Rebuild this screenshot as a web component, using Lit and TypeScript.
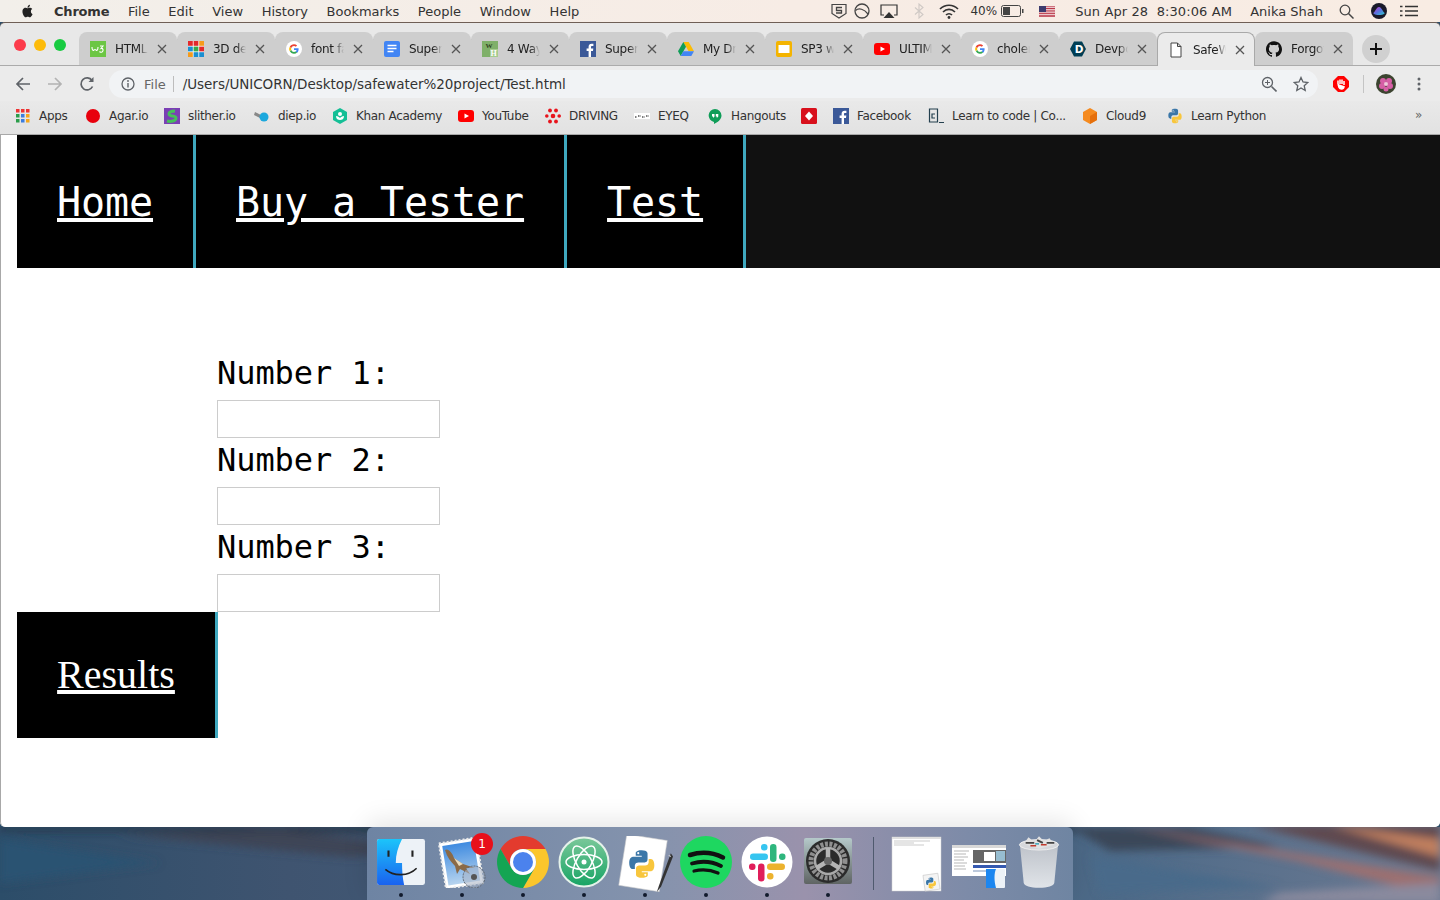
import { LitElement, html, css, svg } from "lit";
import { customElement } from "lit/decorators.js";

const PY_BLUE = "M11.9 1c-5 0-4.7 2.2-4.7 2.2v2.3h4.8v.7H5.3S2 5.8 2 11s2.8 5 2.8 5h1.7v-2.4s-.1-2.8 2.8-2.8h4.7s2.6 0 2.6-2.6V3.6S16.9 1 11.9 1zM9.2 2.5a.85.85 0 110 1.7.85.85 0 010-1.7z";
const GH = "M12 .297c-6.63 0-12 5.373-12 12 0 5.303 3.438 9.8 8.205 11.385.6.113.82-.258.82-.577 0-.285-.01-1.04-.015-2.04-3.338.724-4.042-1.61-4.042-1.61C4.422 18.07 3.633 17.7 3.633 17.7c-1.087-.744.084-.729.084-.729 1.205.084 1.838 1.236 1.838 1.236 1.07 1.835 2.809 1.305 3.495.998.108-.776.417-1.305.76-1.605-2.665-.3-5.466-1.332-5.466-5.93 0-1.31.465-2.38 1.235-3.22-.135-.303-.54-1.523.105-3.176 0 0 1.005-.322 3.3 1.23.96-.267 1.98-.399 3-.405 1.02.006 2.04.138 3 .405 2.28-1.552 3.285-1.23 3.285-1.23.645 1.653.24 2.873.12 3.176.765.84 1.23 1.91 1.23 3.22 0 4.61-2.805 5.625-5.475 5.92.42.36.81 1.096.81 2.22 0 1.606-.015 2.896-.015 3.286 0 .315.21.69.825.57C20.565 22.092 24 17.592 24 12.297c0-6.627-5.373-12-12-12";
const APPLE = "M18.71 19.5c-.83 1.24-1.71 2.45-3.05 2.47-1.34.03-1.77-.79-3.29-.79-1.53 0-2 .77-3.27.82-1.31.05-2.3-1.32-3.14-2.53C4.25 17 2.94 12.45 4.7 9.39c.87-1.52 2.43-2.48 4.12-2.51 1.28-.02 2.5.87 3.29.87.78 0 2.26-1.07 3.8-.91.65.03 2.47.26 3.64 1.98-.09.06-2.17 1.28-2.15 3.81.03 3.02 2.65 4.03 2.68 4.04-.03.07-.42 1.44-1.38 2.83M13 3.5c.73-.83 1.94-1.46 2.94-1.5.13 1.17-.34 2.35-1.04 3.19-.69.85-1.83 1.51-2.95 1.42-.15-1.15.41-2.35 1.05-3.11z";

const ic = (body: unknown, vb = "0 0 16 16", cls = "i16") =>
  html`<svg class=${cls} viewBox=${vb}>${body}</svg>`;

const google = ic(svg`<circle cx="8" cy="8" r="8" fill="#fff"/>
  <path d="M12.6 8.2c0-.4 0-.7-.1-1H8v1.9h2.6c-.1.6-.5 1.2-1 1.5l1.5 1.2c.9-.8 1.5-2.1 1.5-3.6z" fill="#4285f4"/>
  <path d="M8 12.8c1.3 0 2.3-.4 3.1-1.2l-1.5-1.2c-.4.3-1 .5-1.6.5-1.2 0-2.3-.8-2.7-2l-1.6 1.2c.8 1.6 2.4 2.7 4.3 2.7z" fill="#34a853"/>
  <path d="M5.3 8.9c-.2-.6-.2-1.2 0-1.8L3.7 5.9c-.7 1.3-.7 2.9 0 4.2z" fill="#fbbc05"/>
  <path d="M8 5c.7 0 1.3.2 1.8.7l1.3-1.3C10.300 3.600 9.200 3.200 8 3.200c-1.900 0-3.500 1.100-4.300 2.700l1.600 1.200C5.700 5.900 6.800 5 8 5z" fill="#ea4335"/>`);
const fb = ic(svg`<rect width="16" height="16" fill="#3b5998"/><path d="M11 16v-6h2l.3-2.400H11V6c0-.7.200-1.100 1.200-1.100h1.200V2.800c-.2 0-1-.1-1.800-.1-1.800 0-3 1.100-3 3.100v1.800h-2V10h2v6z" fill="#fff"/>`);
const yt = ic(svg`<rect x="0" y="2" width="16" height="12" rx="3" fill="#f00"/><path d="M6.500 5.500v5L11 8z" fill="#fff"/>`);

const tabs = [
  { t: "HTML", i: ic(svg`<rect width="16" height="16" fill="#6cc644"/><path d="M2 6c0 3 1 4 2 3s1-1 2 0 2 0 2-3M10 5h3l-2 2.500c2-.5 3 2 1 3.500-1 .5-2 0-2.500-.5" fill="none" stroke="#fff" stroke-width="1.100"/>`) },
  { t: "3D de", i: ic(svg`<rect width="16" height="16" fill="#fff"/><rect width="4.800" height="4.800" fill="#e3292b"/><rect x="5.600" width="4.800" height="4.800" fill="#e3292b"/><rect x="11.200" width="4.800" height="4.800" fill="#f59b1c"/><rect y="5.600" width="4.800" height="4.800" fill="#1a8fd1"/><rect x="5.600" y="5.600" width="4.800" height="4.800" fill="#39a84a"/><rect x="11.200" y="5.600" width="4.800" height="4.800" fill="#e3292b"/><rect y="11.200" width="4.800" height="4.800" fill="#f59b1c"/><rect x="5.600" y="11.200" width="4.800" height="4.800" fill="#1a8fd1"/><rect x="11.200" y="11.200" width="4.800" height="4.800" fill="#1a8fd1"/>`) },
  { t: "font fa", i: google },
  { t: "Super", i: ic(svg`<rect width="16" height="16" rx="2" fill="#4285f4"/><path d="M3.500 4.500h9M3.500 7.500h9M3.500 10.500h6" stroke="#fff" stroke-width="1.500"/>`) },
  { t: "4 Way", i: ic(svg`<rect width="16" height="16" fill="#7fb069"/><rect x="8" y="8" width="8" height="8" fill="#a5cc8e"/><text x="3.500" y="7" font-size="7" font-weight="700" font-family="Liberation Serif" fill="#30421f">W</text><text x="8.500" y="15" font-size="8" font-weight="700" font-family="Liberation Serif" fill="#fff">H</text>`) },
  { t: "Super", i: fb },
  { t: "My Dr", i: ic(svg`<path d="M5.300 1h5.400l5.300 9.300h-5.400z" fill="#fbbc05"/><path d="M5.300 1L0 10.300 2.700 15l5.300-9.300z" fill="#0f9d58"/><path d="M2.700 15h10.600L16 10.300H5.400z" fill="#4285f4"/>`) },
  { t: "SP3 w", i: ic(svg`<rect width="16" height="16" rx="2" fill="#f4b400"/><rect x="2.500" y="4" width="11" height="8" fill="#fff"/>`) },
  { t: "ULTIM", i: yt },
  { t: "choler", i: google },
  { t: "Devpo", i: ic(svg`<path d="M4 .5h8L16 8l-4 7.500H4L0 8z" fill="#003e54"/><text x="4.800" y="11.800" font-size="10.500" font-weight="700" font-family="DejaVu Sans" fill="#fff">D</text>`) },
  { t: "SafeW", a: true, i: ic(svg`<path d="M3 1h6.500L13 4.500V15H3zM9.500 1v3.500H13" fill="#fff" stroke="#444" stroke-width="1"/>`) },
  { t: "Forgot", i: ic(svg`<path d=${GH} fill="#111"/>`, "0 0 24 24") },
];

const py = (size: number) => html`<svg width=${size} height=${size} viewBox="0 0 24 24"><path d=${PY_BLUE} fill="#3b77a8"/><path d=${PY_BLUE} fill="#f8c63d" transform="rotate(180 12 12)"/></svg>`;

const bookmarks = [
  { w: 70, t: "Apps", i: ic(svg`<g fill="#e33"><rect x="1" y="1" width="3.500" height="3.500"/><rect x="6" y="1" width="3.500" height="3.500"/><rect x="11" y="1" width="3.500" height="3.500"/></g><rect x="1" y="6" width="3.500" height="3.500" fill="#2a9d4a"/><rect x="6" y="6" width="3.500" height="3.500" fill="#3b7de0"/><rect x="11" y="6" width="3.500" height="3.500" fill="#f4a61d"/><rect x="1" y="11" width="3.500" height="3.500" fill="#2a9d4a"/><rect x="6" y="11" width="3.500" height="3.500" fill="#3b7de0"/><rect x="11" y="11" width="3.500" height="3.500" fill="#f4a61d"/>`) },
  { w: 79, t: "Agar.io", i: ic(svg`<circle cx="8" cy="8" r="7" fill="#e8000d"/>`) },
  { w: 90, t: "slither.io", i: ic(svg`<rect width="16" height="16" fill="#7b3fb5"/><path d="M3 13c4 1 9 0 9-3s-7-1-7-4 3-3 6-3" fill="none" stroke="#46c05a" stroke-width="3"/>`) },
  { w: 78, t: "diep.io", i: ic(svg`<path d="M1 4l6 3-1 3-6-3z" fill="#888"/><circle cx="10" cy="9" r="4.500" fill="#1ca8dd"/>`) },
  { w: 126, t: "Khan Academy", i: ic(svg`<path d="M8 0l7 4v8l-7 4-7-4V4z" fill="#14bf96"/><circle cx="8" cy="6" r="2" fill="#fff"/><path d="M4 8c0 3 2 4 4 4s4-1 4-4c-2 0-3 1-4 2-1-1-2-2-4-2z" fill="#fff"/>`) },
  { w: 87, t: "YouTube", i: yt },
  { w: 89, t: "DRIVING", i: ic(svg`<g fill="#e8141c"><circle cx="8" cy="8" r="2.300"/><circle cx="5" cy="2.500" r="1.900"/><circle cx="11" cy="2.500" r="1.900"/><circle cx="5" cy="13.500" r="1.900"/><circle cx="11" cy="13.500" r="1.900"/><circle cx="1.800" cy="8" r="1.800"/><circle cx="14.200" cy="8" r="1.800"/></g>`) },
  { w: 73, t: "EYEQ", i: ic(svg`<rect y="5" width="16" height="6" fill="#fff"/><path d="M1 9h2M4 8h3M8 9h3M12 8h3" stroke="#555" stroke-width="1.500" stroke-dasharray="1 .5"/>`) },
  { w: 94, t: "Hangouts", i: ic(svg`<path d="M8 1a6.500 6.500 0 00-1 12.900V16c3.500-1.500 7.500-4.500 7.500-8.500A6.500 6.500 0 008 1z" fill="#0f9d58"/><path d="M5 6h2.500v2.500L6 10V8.500H5zM8.800 6h2.500v2.500L9.800 10V8.500h-1z" fill="#fff"/>`) },
  { w: 32, t: "", i: ic(svg`<rect width="16" height="16" rx="1.500" fill="#d8101c"/><path d="M8 3.500L12 8l-4 4.500L4 8z" fill="#fff"/>`) },
  { w: 95, t: "Facebook", i: fb },
  { w: 154, t: "Learn to code | Co...", i: ic(svg`<path d="M1.500 1h8v13h-8z" fill="none" stroke="#24404f" stroke-width="1.200"/><path d="M7 6H4v4h3M11 14.500h5" fill="none" stroke="#24404f" stroke-width="1.200"/>`) },
  { w: 85, t: "Cloud9", i: ic(svg`<path d="M8 0l7 4v8l-7 4-7-4V4z" fill="#f58a1f"/><path d="M8 8l7-4v8l-7 4z" fill="#e56f0c"/>`) },
  { w: 100, t: "Learn Python", i: py(16) },
];

const wall = svg`<svg class="wall" viewBox="0 0 1440 73" preserveAspectRatio="none">
  <defs>
    <linearGradient id="wb" x1="0" x2="1" y1="0" y2="0"><stop offset="0" stop-color="#2c4d69"/><stop offset=".2" stop-color="#3f5470"/><stop offset=".78" stop-color="#4d6a88"/><stop offset="1" stop-color="#6d7a92"/></linearGradient>
    <filter id="b1" x="-20%" y="-100%" width="140%" height="300%"><feGaussianBlur stdDeviation="4"/></filter>
  </defs>
  <rect width="1440" height="73" fill="url(#wb)"/>
  <g filter="url(#b1)">
    <path d="M0 0H1100V5C800 8 500 6 0 3z" fill="#1c2a38"/>
    <path d="M120 8l230 22 100-6L280 2z" fill="#3e4253" opacity=".9"/>
    <path d="M0 12L160 36l-160 20z" fill="#2b5272"/>
    <path d="M1070 0h120l90 20-170 4z" fill="#3a4658"/>
    <path d="M1120 -2l320 52v20L1300 34z" fill="#9d6f70"/>
    <path d="M1250 -2h190v46z" fill="#5e4a50"/>
    <path d="M1330 -2l110 32V12z" fill="#c07f5f"/>
    <path d="M1090 30l190 30-180 6z" fill="#4a6a8a"/>
    <path d="M1280 66l160-10v20h-180z" fill="#8a8a9e"/>
  </g>
</svg>`;

const finder = html`<svg class="d48" viewBox="0 0 48 48"><defs><linearGradient id="f1" x1="0" x2="0" y1="0" y2="1"><stop offset="0" stop-color="#1cc4fa"/><stop offset="1" stop-color="#1a62ef"/></linearGradient></defs><rect x="1" y="2" width="46" height="44" rx="2" fill="#edf2f7"/><path d="M3 2h22c-4 8-6 15-6 23h6c0 7 .5 14 2 21H3a2 2 0 01-2-2V4a2 2 0 012-2z" fill="url(#f1)"/><path d="M12 13v6M35 13v6" stroke="#222" stroke-width="2"/><path d="M9 31c8 7 22 7 30-1" fill="none" stroke="#222" stroke-width="1.600"/></svg>`;

const mail = html`<svg class="d52" viewBox="0 0 52 52"><defs><linearGradient id="m1" x1="0" x2="0" y1="0" y2="1"><stop offset="0" stop-color="#3f8be0"/><stop offset="1" stop-color="#b7d4ef"/></linearGradient></defs><g transform="rotate(-9 26 26)"><rect x="6" y="4" width="38" height="46" fill="#fff" stroke="#e8e8e8" stroke-dasharray="2 2" stroke-width="2"/><rect x="9" y="7" width="32" height="40" fill="url(#m1)"/></g><path d="M9 14c3-2 7 2 9 8l9 6 12 4-9 0 4 6-10-5-3 5-2-8c-4-4-8-9-10-16z" fill="#8a6a48"/><path d="M18 22l9 6-4 2z" fill="#e9dcc0"/><circle cx="38" cy="41" r="11" fill="#a8b3c4" fill-opacity=".55" stroke="#5e6670" stroke-dasharray="2 1"/><circle cx="38" cy="41" r="3" fill="#555"/></svg>`;

const chrome = html`<svg class="d52" viewBox="0 0 52 52"><path d="M3.500 13A26 26 0 0148.500 13H26A13 13 0 0014.700 32.500z" fill="#e33b2e"/><path d="M48.500 13A26 26 0 0126 52l11.300-19.500A13 13 0 0026 13z" fill="#fbc62c"/><path d="M26 52A26 26 0 013.500 13l11.200 19.500a13 13 0 0022.600 0z" fill="#14a553"/><circle cx="26" cy="26" r="13" fill="#fff"/><circle cx="26" cy="26" r="10" fill="#4b82ed"/></svg>`;

const atom = html`<svg class="d52" viewBox="0 0 52 52"><defs><linearGradient id="a1" x1="0" x2="0" y1="0" y2="1"><stop offset="0" stop-color="#7bc89a"/><stop offset="1" stop-color="#16a464"/></linearGradient></defs><circle cx="26" cy="26" r="24.500" fill="url(#a1)" stroke="#e5f2ea" stroke-width="2"/><g fill="none" stroke="#fff" stroke-width="1.500"><ellipse cx="26" cy="26" rx="18" ry="7.500"/><ellipse cx="26" cy="26" rx="18" ry="7.500" transform="rotate(60 26 26)"/><ellipse cx="26" cy="26" rx="18" ry="7.500" transform="rotate(120 26 26)"/></g><circle cx="26" cy="26" r="2.500" fill="#fff"/></svg>`;

const pydoc = html`<svg class="d52 wide" viewBox="0 0 52 52"><g transform="rotate(9 24 26)"><rect x="5" y="1" width="38" height="48" fill="#fff" stroke="#ccc" stroke-width=".5"/></g><svg x="9" y="12" width="28" height="28" viewBox="0 0 24 24"><path d=${PY_BLUE} fill="#3b77a8"/><path d=${PY_BLUE} fill="#f8c63d" transform="rotate(180 12 12)"/></svg><path d="M50 16L39 46l-2 6 4-5 11-28z" fill="#333"/><path d="M48 18l2 1" stroke="#ccc"/></svg>`;

const spotify = html`<svg class="d52" viewBox="0 0 52 52"><circle cx="26" cy="26" r="26" fill="#1ed760"/><g fill="none" stroke="#111" stroke-linecap="round"><path d="M10 19c11-3.500 23-2.500 33 2.500" stroke-width="4.500"/><path d="M12 27.500c10-3 20-2 29 2.500" stroke-width="3.800"/><path d="M14 35c8-2 16-1.500 24 2" stroke-width="3.200"/></g></svg>`;

const slack = html`<svg class="d52" viewBox="0 0 52 52"><circle cx="26" cy="26" r="25.500" fill="#fff"/><rect x="9" y="17.500" width="18" height="6.500" rx="3.200" fill="#36c5f0"/><rect x="20" y="8" width="6.500" height="6.500" rx="3" fill="#36c5f0"/><rect x="29" y="8" width="6.500" height="18" rx="3.200" fill="#2eb67d"/><rect x="38" y="17.500" width="6.500" height="6.500" rx="3" fill="#2eb67d"/><rect x="26" y="27.500" width="18" height="6.500" rx="3.200" fill="#ecb22e"/><rect x="26" y="37" width="6.500" height="6.500" rx="3" fill="#ecb22e"/><rect x="17" y="27.500" width="6.500" height="18" rx="3.200" fill="#e01e5a"/><rect x="8" y="27.500" width="6.500" height="6.500" rx="3" fill="#e01e5a"/></svg>`;

const prefs = html`<svg class="d52" viewBox="0 0 52 52"><defs><linearGradient id="p1" x1="0" x2="0" y1="0" y2="1"><stop offset="0" stop-color="#b5c9ca"/><stop offset="1" stop-color="#5f6463"/></linearGradient></defs><rect x="2" y="2" width="48" height="46" rx="2" fill="url(#p1)"/><circle cx="26" cy="25" r="22" fill="#2b2b2b"/><circle cx="26" cy="25" r="17" fill="none" stroke="#8f8f8f" stroke-width="5" stroke-dasharray="3 1.500"/><circle cx="26" cy="25" r="13" fill="none" stroke="#a9a9a9" stroke-width="2.500"/><g stroke="#b5b5b5" stroke-width="4.500"><path d="M26 25V12M26 25L14.500 32M26 25l11.500 7"/></g><circle cx="26" cy="25" r="4" fill="#666"/></svg>`;

const docthumb = html`<svg class="thumb" viewBox="0 0 52 56"><rect x="1" y="1" width="49" height="54" fill="#fff" stroke="#d0d0d0" stroke-width=".5"/><rect x="1" y="1" width="49" height="2" fill="#e0e0e0"/><path d="M3 5h36M3 7h20M3 9h30" stroke="#aaa" stroke-width=".6"/><g transform="rotate(-8 42 46)"><rect x="33" y="38" width="15" height="16" fill="#f4f4f4" stroke="#bbb" stroke-width=".5"/></g><svg x="34" y="41" width="12" height="12" viewBox="0 0 24 24"><path d=${PY_BLUE} fill="#3b77a8"/><path d=${PY_BLUE} fill="#f8c63d" transform="rotate(180 12 12)"/></svg></svg>`;

const shotthumb = html`<svg class="thumb" viewBox="0 0 56 56"><rect x="2" y="9" width="54" height="31" fill="#fff"/><rect x="2" y="9" width="54" height="3" fill="#d8d8d8"/><path d="M4 15h15M4 18h12M4 21h14M4 24h10M4 27h13M4 30h11M4 33h12" stroke="#888" stroke-width=".6"/><rect x="23" y="14" width="33" height="13" fill="#666"/><rect x="34" y="16" width="11" height="9" fill="#fff"/><rect x="46" y="15" width="9" height="10" fill="#97bdd0"/><rect x="23" y="29" width="33" height="3" fill="#3559b0"/><path d="M23 35h32" stroke="#7a93b8" stroke-width="1"/><rect x="36" y="33" width="19" height="19" rx="1" fill="#edf2f7"/><path d="M36 33h10c-2 4-2 12 0 19H36z" fill="#1c86f0"/></svg>`;

const trash = html`<svg class="d52 tr" viewBox="0 0 44 56"><defs><linearGradient id="t1" x1="0" x2="0" y1="0" y2="1"><stop offset="0" stop-color="#c6c9ce"/><stop offset="1" stop-color="#eceef0"/></linearGradient></defs><path d="M2 10h40l-4 40c-.5 3-7 5-16 5s-15.500-2-16-5z" fill="url(#t1)" fill-opacity=".9"/><ellipse cx="22" cy="10" rx="20.500" ry="5.500" fill="#d5d7db" stroke="#eee"/><path d="M6 9l5-7 6 5 5-6 5 5 6-3 5 7-16 4z" fill="#e2e2e2"/><path d="M8 8h9M20 5l6 3M30 8h8" stroke="#444" stroke-width="2"/><path d="M13 11h6M24 10h6" stroke="#c0392b" stroke-width="1.500"/><path d="M18 9h4" stroke="#2f9fb5" stroke-width="1.500"/></svg>`;

@customElement("app-root")
export class AppRoot extends LitElement {
  static styles = css`
    :host { display: block; position: relative; width: 1440px; height: 900px; overflow: hidden; font-family: "DejaVu Sans", sans-serif; background: #2c4d69; }
    svg { display: block; flex: none; }
    .i16 { width: 16px; height: 16px; }
    .wall { position: absolute; left: 0; top: 827px; width: 1440px; height: 73px; }

    .menubar { position: relative; height: 22px; box-sizing: border-box; display: flex; align-items: center; padding-left: 20px; font-size: 13px; color: #333; background: linear-gradient(90deg, #f2efea, #f7ece5 55%, #f8ece3); }
    .apple { width: 15px; height: 16px; margin-right: 19px; }
    .menus { display: flex; gap: 18.650px; }
    .menus b { font-weight: 700; letter-spacing: -0.2px; }
    .status { margin-left: auto; display: flex; align-items: center; }
    .s1 { width: 16px; height: 16px; margin-right: 7px; }
    .s2 { width: 16px; height: 16px; margin-right: 10px; }
    .s3 { width: 18px; height: 15px; margin-right: 16px; }
    .s4 { width: 10px; height: 16px; margin-right: 15px; }
    .s5 { width: 20px; height: 15px; margin-right: 11px; }
    .pct { font-size: 12px; margin-right: 4px; }
    .batt { width: 23px; height: 12px; margin-right: 15px; }
    .flag { width: 16px; height: 11px; margin-right: 20px; }
    .clock { margin-right: 17px; width: 158px; white-space: pre; letter-spacing: 0.1px; }
    .who { margin-right: 16px; white-space: nowrap; }
    .srch { width: 15px; height: 15px; margin-right: 17px; }
    .siri { width: 16px; height: 16px; margin-right: 13px; }
    .lst { width: 18px; height: 12px; margin-right: 22px; }

    .window { position: relative; height: 805px; display: flex; flex-direction: column; border-top: 1px solid #6f5f56; border-radius: 5px; overflow: hidden; background: #e8e8e8; box-sizing: border-box; }

    .strip { height: 43px; box-sizing: border-box; padding-top: 9px; display: flex; align-items: flex-start; border-bottom: 1px solid #ababab; flex: none; }
    .lights { width: 79px; box-sizing: border-box; padding: 7px 0 0 14px; display: flex; gap: 8px; }
    .lights i { width: 12px; height: 12px; border-radius: 50%; }
    .r { background: #fc3b4b; } .y { background: #fdbb0a; } .g { background: #18cb41; }
    .tabs { display: flex; }
    .tab { position: relative; width: 98px; height: 33px; box-sizing: border-box; background: #cecece; border-radius: 8px 8px 0 0; display: flex; align-items: center; padding-left: 11px; font: 12px "DejaVu Sans", sans-serif; letter-spacing: -0.3px; color: #222; }
    .tab.active { background: #ebebeb; border: 1px solid #a9a9a9; border-bottom: 0; height: 34px; padding-left: 10px; z-index: 1; }
    .tab .title { margin-left: 9px; width: 33px; overflow: hidden; white-space: nowrap; -webkit-mask-image: linear-gradient(90deg, #000 72%, transparent); mask-image: linear-gradient(90deg, #000 72%, transparent); }
    .tab .x { width: 10px; height: 10px; margin-left: 9px; }
    .tab.sep::after { content: ""; position: absolute; right: -1px; top: 7px; height: 19px; width: 1px; background: #9c9c9c; }
    .newtab { width: 28px; height: 28px; margin: 3px 0 0 9px; border-radius: 50%; background: #d0d0d0; display: flex; align-items: center; justify-content: center; }

    .toolbar { height: 35px; box-sizing: border-box; padding-top: 1px; display: flex; align-items: center; background: #ebebeb; flex: none; }
    .tb { width: 32px; display: flex; justify-content: center; }
    .tb1 { margin-left: 7px; }
    .omni { margin-left: 6px; width: 1209px; height: 28px; box-sizing: border-box; border-radius: 14px; background: #f1f3f5; display: flex; align-items: center; padding-left: 11px; font: 14px "DejaVu Sans", sans-serif; }
    .file { color: #666; margin-left: 8px; font-size: 13px; }
    .bar { width: 1px; height: 16px; background: #bdbdbd; margin: 0 9px 0 7px; }
    .url { color: #333; font-size: 13.500px; letter-spacing: -0.04px; white-space: nowrap; }
    .rt { margin-left: auto; display: flex; align-items: center; gap: 16px; padding-right: 9px; }
    .tools { display: flex; align-items: center; }
    .t-op { margin: 0 14px 0 15px; }
    .t-sep { width: 1px; height: 18px; background: #c4c4c4; margin-right: 12px; }
    .avatar { width: 20px; height: 20px; margin-right: 21px; }
    .dots { width: 4px; height: 14px; }

    .marks { height: 34px; box-sizing: border-box; padding: 0 0 4px 15px; display: flex; align-items: center; background: linear-gradient(#e9e9e9, #e2e2e2); border-bottom: 1px solid #a8a8a8; font-size: 12px; letter-spacing: -0.33px; color: #333; position: relative; flex: none; }
    .mark { display: flex; align-items: center; gap: 8px; white-space: nowrap; flex: none; box-sizing: border-box; }
    .chev { position: absolute; right: 18px; top: 7px; font-size: 12px; color: #666; }

    .page { flex: 1; background: #fff; padding-left: 16px; border-left: 1px solid #a8a8a8; border-radius: 0 0 5px 5px; }
    .nav { display: flex; background: #111; }
    .nav a, .res a { color: #fff; text-decoration: underline; }
    .item { background: #000; padding: 41px 40px 39px; border-right: 3px solid #3fa8bf; font: 40px/53px "DejaVu Sans Mono", monospace; letter-spacing: -0.08px; white-space: pre; }
    .form { margin: 83px 0 0 200px; width: 223px; display: flex; flex-direction: column; }
    .form label { font: 32px/45px "DejaVu Sans Mono", monospace; padding-bottom: 4px; letter-spacing: -0.06px; color: #000; white-space: pre; }
    .form input { width: 223px; height: 38px; box-sizing: border-box; border: 1px solid #ccc; margin: 0; padding: 0; background: #fff; outline: none; }
    .res { width: 198px; background: #000; border-right: 3px solid #3fa8bf; font: 40px/46px "Liberation Serif", serif; padding: 40px 0; text-align: center; }

    .dock { position: absolute; left: 367px; top: 827px; width: 706px; height: 73px; box-sizing: border-box; padding-left: 3px; display: flex; border-radius: 6px 6px 0 0; background: linear-gradient(90deg, #6e84a3, #8493ad 40%, #9a92ac 62%, #7d8ba8 85%, #6f85a2); box-shadow: 0 -6px 26px rgba(0,0,0,.1); }
    .cell { position: relative; width: 61px; height: 73px; display: flex; justify-content: center; padding-top: 9px; box-sizing: border-box; }
    .cell.on::after { content: ""; position: absolute; left: 29px; top: 66px; width: 4px; height: 4px; border-radius: 50%; background: #111a2c; }
    .d52 { width: 52px; height: 52px; }
    .d48 { width: 50px; height: 50px; margin-top: 1px; }
    .d52.wide { width: 56px; height: 56px; }
    .d52.tr { width: 42px; height: 54px; margin-top: -1px; }
    .thumb { width: 56px; height: 56px; }
    .dsep { width: 1px; height: 53px; margin: 10px 12.500px 0 14.500px; background: #4f5a6e; }
    .badge { position: absolute; left: 40px; top: 6px; width: 22px; height: 22px; border-radius: 50%; background: #e8101a; color: #fff; font-size: 12px; line-height: 22px; text-align: center; }
  `;

  render() {
    const x = html`<svg class="x" viewBox="0 0 10 10"><path d="M1 1l8 8M9 1l-8 8" stroke="#555" stroke-width="1.300"/></svg>`;
    return html`
      ${wall}
      <div class="menubar">
        <svg class="apple" viewBox="0 0 24 24"><path d=${APPLE} fill="#222"/></svg>
        <div class="menus"><b>Chrome</b><span>File</span><span>Edit</span><span>View</span><span>History</span><span>Bookmarks</span><span>People</span><span>Window</span><span>Help</span></div>
        <div class="status">
          <svg class="s1" viewBox="0 0 16 16"><path d="M1 1.500h14v9L8 15l-7-4.500z" fill="none" stroke="#444" stroke-width="1.200"/><path d="M11 4.500H5.500v3h5v2.500H5" fill="none" stroke="#444" stroke-width="1.300"/></svg>
          <svg class="s2" viewBox="0 0 16 16"><circle cx="8" cy="8" r="7" fill="none" stroke="#444" stroke-width="1.300"/><path d="M1.500 7.500C5 4.500 10 6 14 11" fill="none" stroke="#444" stroke-width="1.300"/></svg>
          <svg class="s3" viewBox="0 0 18 15"><path d="M4 11H1V1h16v10h-3" fill="none" stroke="#333" stroke-width="1.200"/><path d="M9 8l5.500 6h-11z" fill="#333"/></svg>
          <svg class="s4" viewBox="0 0 10 16"><path d="M1 4.500l8 7L5 15V1l4 3.500-8 7" fill="none" stroke="#cfc9c5" stroke-width="1.100"/></svg>
          <svg class="s5" viewBox="0 0 20 15"><path d="M1 5c5-5 13-5 18 0M4 8c3.500-3.500 8.500-3.500 12 0M7 11c1.700-1.700 4.300-1.700 6 0" fill="none" stroke="#333" stroke-width="1.700"/><circle cx="10" cy="13.500" r="1.400" fill="#333"/></svg>
          <span class="pct">40%</span>
          <svg class="batt" viewBox="0 0 23 12"><rect x=".5" y=".5" width="19" height="11" rx="2" fill="none" stroke="#444"/><rect x="2" y="2" width="7" height="8" fill="#444"/><rect x="21" y="4" width="1.500" height="4" fill="#444"/></svg>
          <svg class="flag" viewBox="0 0 16 11"><rect width="16" height="11" fill="#fff"/><path d="M0 .8h16M0 2.500h16M0 4.200h16M0 5.900h16M0 7.600h16M0 9.300h16M0 10.700h16" stroke="#b22234" stroke-width=".9"/><rect width="7" height="6" fill="#3c3b6e"/></svg>
          <span class="clock">Sun Apr 28  8:30:06 AM</span>
          <span class="who">Anika Shah</span>
          <svg class="srch" viewBox="0 0 15 15"><circle cx="6" cy="6" r="4.800" fill="none" stroke="#444" stroke-width="1.300"/><path d="M9.500 9.500l5 5" stroke="#444" stroke-width="1.500"/></svg>
          <svg class="siri" viewBox="0 0 16 16"><defs><linearGradient id="si" x1="0" x2="1" y1="0" y2="1"><stop offset="0" stop-color="#d33ac7"/><stop offset=".5" stop-color="#5a6fe0"/><stop offset="1" stop-color="#2ed0d0"/></linearGradient></defs><circle cx="8" cy="8" r="8" fill="#1a1a2a"/><path d="M2 10c2 0 3-6 6-6s4 6 6 6c-2 2-4 2-6 2s-4 0-6-2z" fill="url(#si)"/></svg>
          <svg class="lst" viewBox="0 0 18 12"><path d="M5 1.500h13M5 6h13M5 10.500h13" stroke="#333" stroke-width="1.500"/><path d="M0 1.500h2.500M0 6h2.500M0 10.500h2.500" stroke="#333" stroke-width="1.500"/></svg>
        </div>
      </div>

      <div class="window">
        <div class="strip">
          <div class="lights"><i class="r"></i><i class="y"></i><i class="g"></i></div>
          <div class="tabs">
            ${tabs.map((t, n) => html`<div class="tab ${t.a ? "active" : ""} ${!t.a && n < 10 ? "sep" : ""}">${t.i}<span class="title">${t.t}</span>${x}</div>`)}
          </div>
          <div class="newtab"><svg class="i16" viewBox="0 0 16 16"><path d="M8 2v12M2 8h12" stroke="#111" stroke-width="2"/></svg></div>
        </div>

        <div class="toolbar">
          <div class="tb tb1"><svg class="i16" viewBox="0 0 16 16"><path d="M15 8H2M8 2L2 8l6 6" fill="none" stroke="#5f6368" stroke-width="1.700"/></svg></div>
          <div class="tb"><svg class="i16" viewBox="0 0 16 16"><path d="M1 8h13M8 2l6 6-6 6" fill="none" stroke="#b3b3b3" stroke-width="1.700"/></svg></div>
          <div class="tb"><svg class="i16" viewBox="0 0 16 16"><path d="M13.500 10.500A6 6 0 1113 4.500" fill="none" stroke="#5f6368" stroke-width="1.700"/><path d="M14.500 1v5h-5z" fill="#5f6368"/></svg></div>
          <div class="omni">
            <svg class="i16" viewBox="0 0 16 16"><circle cx="8" cy="8" r="6" fill="none" stroke="#5f6368" stroke-width="1.300"/><path d="M8 7v4.500" stroke="#5f6368" stroke-width="1.400"/><circle cx="8" cy="5" r=".9" fill="#5f6368"/></svg>
            <span class="file">File</span><span class="bar"></span>
            <span class="url">/Users/UNICORN/Desktop/safewater%20project/Test.html</span>
            <div class="rt">
              <svg class="i16" viewBox="0 0 16 16"><circle cx="6.500" cy="6.500" r="5" fill="none" stroke="#5f6368" stroke-width="1.300"/><path d="M10.500 10.500l5 5" stroke="#5f6368" stroke-width="1.600"/><path d="M4 6.500h5M6.500 4v5" stroke="#5f6368"/></svg>
              <svg class="i16" viewBox="0 0 16 16"><path d="M8 1.500l2 4.500 4.800.5-3.600 3.200 1 4.800L8 12l-4.200 2.500 1-4.800L1.200 6.500 6 6z" fill="none" stroke="#5f6368" stroke-width="1.300"/></svg>
            </div>
          </div>
          <div class="tools">
            <svg class="i16 t-op" viewBox="0 0 16 16"><path d="M5 0h6l5 5v6l-5 5H5l-5-5V5z" fill="#f00"/><path d="M5 8V4.500M7 8V3.500M9 8V3.500M11 9V5M5 8l1 3.500c.5 1 1.500 1.500 2.500 1.500s2.500-1 2.500-3" stroke="#fff" stroke-width="1.500" fill="#fff"/></svg>
            <span class="t-sep"></span>
            <svg class="avatar" viewBox="0 0 20 20"><circle cx="10" cy="10" r="10" fill="#3c4430"/><g fill="#d65fa6"><circle cx="7" cy="7" r="3"/><circle cx="13" cy="7" r="3"/><circle cx="6" cy="12" r="3"/><circle cx="14" cy="12" r="3"/><circle cx="10" cy="15" r="2.500"/></g><circle cx="10" cy="10" r="2" fill="#f3c6dc"/></svg>
            <svg class="dots" viewBox="0 0 4 14"><circle cx="2" cy="2" r="1.500" fill="#5f6368"/><circle cx="2" cy="7" r="1.500" fill="#5f6368"/><circle cx="2" cy="12" r="1.500" fill="#5f6368"/></svg>
          </div>
        </div>

        <div class="marks">
          ${bookmarks.map((b) => html`<div class="mark" style="width:${b.w}px">${b.i}${b.t ? html`<span>${b.t}</span>` : ""}</div>`)}
          <span class="chev">»</span>
        </div>

        <div class="page">
          <nav class="nav">
            <div class="item"><a href="#">Home</a></div>
            <div class="item"><a href="#">Buy a Tester</a></div>
            <div class="item"><a href="#">Test</a></div>
          </nav>
          <div class="form">
            <label>Number 1:</label><input type="text" />
            <label>Number 2:</label><input type="text" />
            <label>Number 3:</label><input type="text" />
          </div>
          <div class="res"><a href="#">Results</a></div>
        </div>
      </div>

      <div class="dock">
        <div class="cell on">${finder}</div>
        <div class="cell on">${mail}<span class="badge">1</span></div>
        <div class="cell on">${chrome}</div>
        <div class="cell on">${atom}</div>
        <div class="cell on">${pydoc}</div>
        <div class="cell on">${spotify}</div>
        <div class="cell on">${slack}</div>
        <div class="cell on">${prefs}</div>
        <div class="dsep"></div>
        <div class="cell">${docthumb}</div>
        <div class="cell">${shotthumb}</div>
        <div class="cell">${trash}</div>
      </div>
    `;
  }
}
